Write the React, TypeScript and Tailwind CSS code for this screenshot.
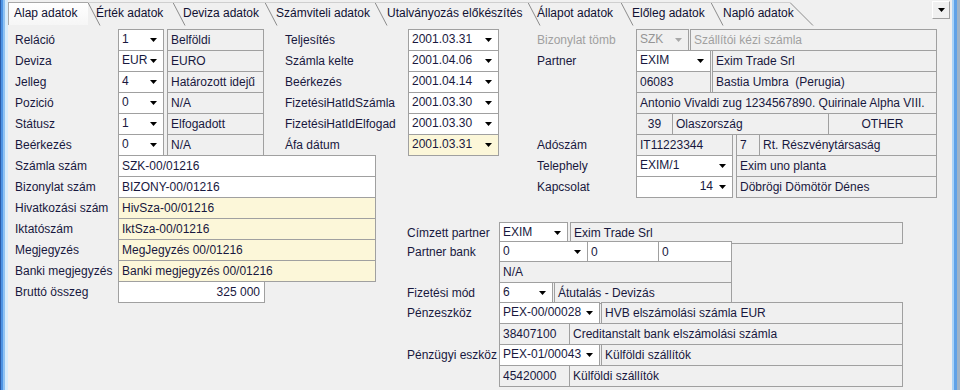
import React from 'react';

type Tone = 'white' | 'gray' | 'yellow';

const toneClass: Record<Tone, string> = {
  white: 'bg-white',
  gray: 'bg-[#f0f0f0]',
  yellow: 'bg-[#fcf7d9]',
};

const Arrow = ({ muted = false }: { muted?: boolean }) => (
  <svg width="7" height="4" viewBox="0 0 7 4" className="shrink-0">
    <path d="M0 0H7L3.5 4Z" fill={muted ? '#a8a8a8' : '#000'} />
  </svg>
);

interface FieldProps {
  w: string;
  tone?: Tone;
  align?: 'left' | 'right' | 'center';
  gap?: string;
  muted?: boolean;
  children?: React.ReactNode;
}

const Field = ({ w, tone = 'gray', align = 'left', gap = '', muted, children }: FieldProps) => (
  <div
    className={`${w} ${toneClass[tone]} ${gap} h-[22px] shrink-0 border border-[#a0a0a0] flex items-center px-[3px] overflow-hidden whitespace-pre ${
      align === 'right' ? 'justify-end pr-[4px]' : align === 'center' ? 'justify-center' : ''
    } ${muted ? 'text-[#a0a0a0]' : ''}`}
  >
    {children}
  </div>
);

interface ComboProps {
  w: string;
  value: string;
  tone?: Tone;
  right?: boolean;
  muted?: boolean;
  gap?: string;
}

const Combo = ({ w, value, tone = 'white', right, muted, gap = '' }: ComboProps) => (
  <div
    className={`${w} ${muted ? 'bg-[#f0f0f0] text-[#959595]' : toneClass[tone]} ${gap} h-[22px] shrink-0 border border-[#a0a0a0] flex items-center pl-[3px] pr-[6px] whitespace-nowrap`}
  >
    <span className={`flex-1 -mt-[2px] ${right ? 'text-right pr-[6px]' : ''}`}>{value}</span>
    <Arrow muted={muted} />
  </div>
);

const Row = ({ label, lw, h = 'h-[21px]', muted, children }: { label?: string; lw: string; h?: string; muted?: boolean; children?: React.ReactNode }) => (
  <div className={`flex ${h}`}>
    <div className={`${lw} shrink-0 h-[21px] flex items-center whitespace-nowrap ${muted ? 'text-[#a0a0a0]' : ''}`}>{label}</div>
    {children}
  </div>
);

const tabs = [
  { label: 'Alap adatok', w: 'w-[80px]', pl: 'pl-[5px]', active: true },
  { label: 'Érték adatok', w: 'w-[85px]', pl: 'pl-[8px]' },
  { label: 'Deviza adatok', w: 'w-[92px]', pl: 'pl-[10px]' },
  { label: 'Számviteli adatok', w: 'w-[110px]', pl: 'pl-[11px]' },
  { label: 'Utalványozás előkészítés', w: 'w-[153px]', pl: 'pl-[12px]' },
  { label: 'Állapot adatok', w: 'w-[93px]', pl: 'pl-[9px]' },
  { label: 'Előleg adatok', w: 'w-[90px]', pl: 'pl-[11px]' },
  { label: 'Napló adatok', w: 'w-[79px]', pl: 'pl-[12px]', last: true },
];

const TabStrip = () => (
  <div className="flex h-[25px] items-start">
    {tabs.map((t) => (
      <div
        key={t.label}
        className={`relative mt-[2px] h-[23px] shrink-0 flex items-center pb-[3px] whitespace-nowrap text-[12px] ${t.w} ${t.pl} ${
          t.active
            ? 'bg-gradient-to-b from-white to-[#f6f6f6] border-l border-t border-[#a8a8a8] text-[#111133]'
            : 'border-t border-[#cfcfcf] text-[#111133]'
        }`}
      >
        {t.label}
        <svg
          className="absolute -top-px left-full"
          width={t.last ? 24 : 13}
          height="24"
          viewBox={t.last ? '0 0 24 24' : '0 0 13 24'}
        >
          <line x1="0" y1="0.5" x2={t.last ? 23 : 12} y2="23.5" stroke="#8c8c8c" strokeWidth="1" />
        </svg>
      </div>
    ))}
    <div className="ml-auto mr-[2px] mt-px w-[18px] h-[18px] border border-t-white border-l-white border-r-[#a0a0a0] border-b-[#a0a0a0] bg-[#f0f0f0] flex items-center justify-center">
      <svg width="7" height="4" viewBox="0 0 7 4">
        <path d="M0 0H7L3.5 4Z" fill="#000" />
      </svg>
    </div>
  </div>
);

export default function App() {
  return (
    <div className="w-[960px] h-[390px] flex overflow-hidden font-['Liberation_Sans',Arial,sans-serif] text-[12px] leading-[14px] text-[#18183e]">
      <div className="w-px bg-[#2c5ca8]" />
      <div className="w-[2px] bg-[#4d94e4]" />
      <div className="w-[2px] bg-[#8fc2f2]" />
      <div className="w-[3px] bg-[#d8ecfb]" />

      <div className="w-[944px] bg-[#f0f0f0] flex flex-col">
        <TabStrip />

        <div className="grid grid-cols-[272px_120px_120px_432px] grid-rows-[126px_42px_auto] pt-[4px]">
          {/* left top */}
          <div className="col-start-1 row-start-1 pl-[7px]">
            {[
              ['Reláció', '1', 'Belföldi'],
              ['Deviza', 'EUR', 'EURO'],
              ['Jelleg', '4', 'Határozott idejű'],
              ['Pozició', '0', 'N/A'],
              ['Státusz', '1', 'Elfogadott'],
              ['Beérkezés', '0', 'N/A'],
            ].map(([l, c, d]) => (
              <Row key={l} label={l} lw="w-[103px]">
                <Combo w="w-[46px]" value={c} />
                <Field w="w-[97px]" gap="ml-[3px]">{d}</Field>
              </Row>
            ))}
          </div>

          {/* middle dates */}
          <div className="col-start-2 col-span-2 row-start-1 pl-[5px]">
            {[
              ['Teljesítés', '2001.03.31', 'white'],
              ['Számla kelte', '2001.04.06', 'white'],
              ['Beérkezés', '2001.04.14', 'white'],
              ['FizetésiHatIdSzámla', '2001.03.30', 'white'],
              ['FizetésiHatIdElfogad', '2001.03.30', 'white'],
              ['Áfa dátum', '2001.03.31', 'yellow'],
            ].map(([l, v, t]) => (
              <Row key={l} label={l} lw="w-[123px]">
                <Combo w="w-[91px]" value={v} tone={t as Tone} />
              </Row>
            ))}
          </div>

          {/* right top: partner */}
          <div className="col-start-4 row-start-1 row-span-2 pl-[17px]">
            <Row label="Bizonylat tömb" lw="w-[99px]" muted>
              <Combo w="w-[53px]" value="SZK" muted />
              <Field w="w-[247px]" gap="ml-px" muted>Szállítói kézi számla</Field>
            </Row>
            <Row label="Partner" lw="w-[99px]">
              <Combo w="w-[75px]" value="EXIM" />
              <Field w="w-[225px]" gap="ml-px">Exim Trade Srl</Field>
            </Row>
            <Row lw="w-[99px]">
              <Field w="w-[75px]">06083</Field>
              <Field w="w-[225px]" gap="ml-px">Bastia Umbra  (Perugia)</Field>
            </Row>
            <Row lw="w-[99px]">
              <Field w="w-[301px]">Antonio Vivaldi zug 1234567890. Quirinale Alpha VIII.</Field>
            </Row>
            <Row lw="w-[99px]">
              <Field w="w-[37px]" align="center">39</Field>
              <Field w="w-[157px]" gap="-ml-px">Olaszország</Field>
              <Field w="w-[109px]" gap="-ml-px" align="center">OTHER</Field>
            </Row>
            <Row label="Adószám" lw="w-[99px]">
              <Field w="w-[97px]">IT11223344</Field>
              <Field w="w-[24px]" gap="ml-[3px]">7</Field>
              <Field w="w-[178px]" gap="-ml-px">Rt. Részvénytársaság</Field>
            </Row>
            <Row label="Telephely" lw="w-[99px]">
              <Combo w="w-[97px]" value="EXIM/1" />
              <Field w="w-[201px]" gap="ml-[3px]">Exim uno planta</Field>
            </Row>
            <Row label="Kapcsolat" lw="w-[99px]">
              <Combo w="w-[97px]" value="14" right />
              <Field w="w-[201px]" gap="ml-[3px]">Döbrögi Dömötör Dénes</Field>
            </Row>
          </div>

          {/* left lower */}
          <div className="col-start-1 col-span-2 row-start-2 row-span-2 pl-[7px]">
            {[
              ['Számla szám', 'SZK-00/01216', 'white'],
              ['Bizonylat szám', 'BIZONY-00/01216', 'white'],
              ['Hivatkozási szám', 'HivSza-00/01216', 'yellow'],
              ['Iktatószám', 'IktSza-00/01216', 'yellow'],
              ['Megjegyzés', 'MegJegyzés 00/01216', 'yellow'],
              ['Banki megjegyzés', 'Banki megjegyzés 00/01216', 'yellow'],
            ].map(([l, v, t]) => (
              <Row key={l} label={l} lw="w-[103px]">
                <Field w="w-[258px]" tone={t as Tone}>{v}</Field>
              </Row>
            ))}
            <Row label="Bruttó összeg" lw="w-[103px]">
              <Field w="w-[147px]" tone="white" align="right">325 000</Field>
            </Row>
          </div>

          {/* lower right: payment */}
          <div className="col-start-3 col-span-2 row-start-3 pt-[25px] pl-[7px]">
            <Row label="Címzett partner" lw="w-[92px]" h="h-[19px]">
              <Combo w="w-[69px]" value="EXIM" />
              <Field w="w-[333px]" gap="ml-[2px]">Exim Trade Srl</Field>
            </Row>
            <Row label="Partner bank" lw="w-[92px]" h="h-[20px]">
              <Combo w="w-[89px]" value="0" />
              <Field w="w-[72px]" tone="white" gap="-ml-px">0</Field>
              <Field w="w-[74px]" tone="white" gap="-ml-px">0</Field>
            </Row>
            <Row lw="w-[92px]">
              <Field w="w-[233px]">N/A</Field>
            </Row>
            <Row label="Fizetési mód" lw="w-[92px]" h="h-[20px]">
              <Combo w="w-[54px]" value="6" />
              <Field w="w-[178px]" gap="ml-px">Átutalás - Devizás</Field>
            </Row>
            <Row label="Pénzeszköz" lw="w-[92px]">
              <Combo w="w-[101px]" value="PEX-00/00028" />
              <Field w="w-[302px]" gap="ml-px">HVB elszámolási számla EUR</Field>
            </Row>
            <Row lw="w-[92px]">
              <Field w="w-[71px]">38407100</Field>
              <Field w="w-[334px]" gap="-ml-px">Creditanstalt bank elszámolási számla</Field>
            </Row>
            <Row label="Pénzügyi eszköz" lw="w-[92px]">
              <Combo w="w-[101px]" value="PEX-01/00043" />
              <Field w="w-[302px]" gap="ml-px">Külföldi szállítók</Field>
            </Row>
            <Row lw="w-[92px]">
              <Field w="w-[71px]">45420000</Field>
              <Field w="w-[334px]" gap="-ml-px">Külföldi szállítók</Field>
            </Row>
          </div>
        </div>
      </div>

      <div className="w-[2px] bg-[#a9d3f7]" />
      <div className="w-[3px] bg-[#5fa2e8]" />
      <div className="w-[3px] bg-[#9fb3c6]" />
    </div>
  );
}
